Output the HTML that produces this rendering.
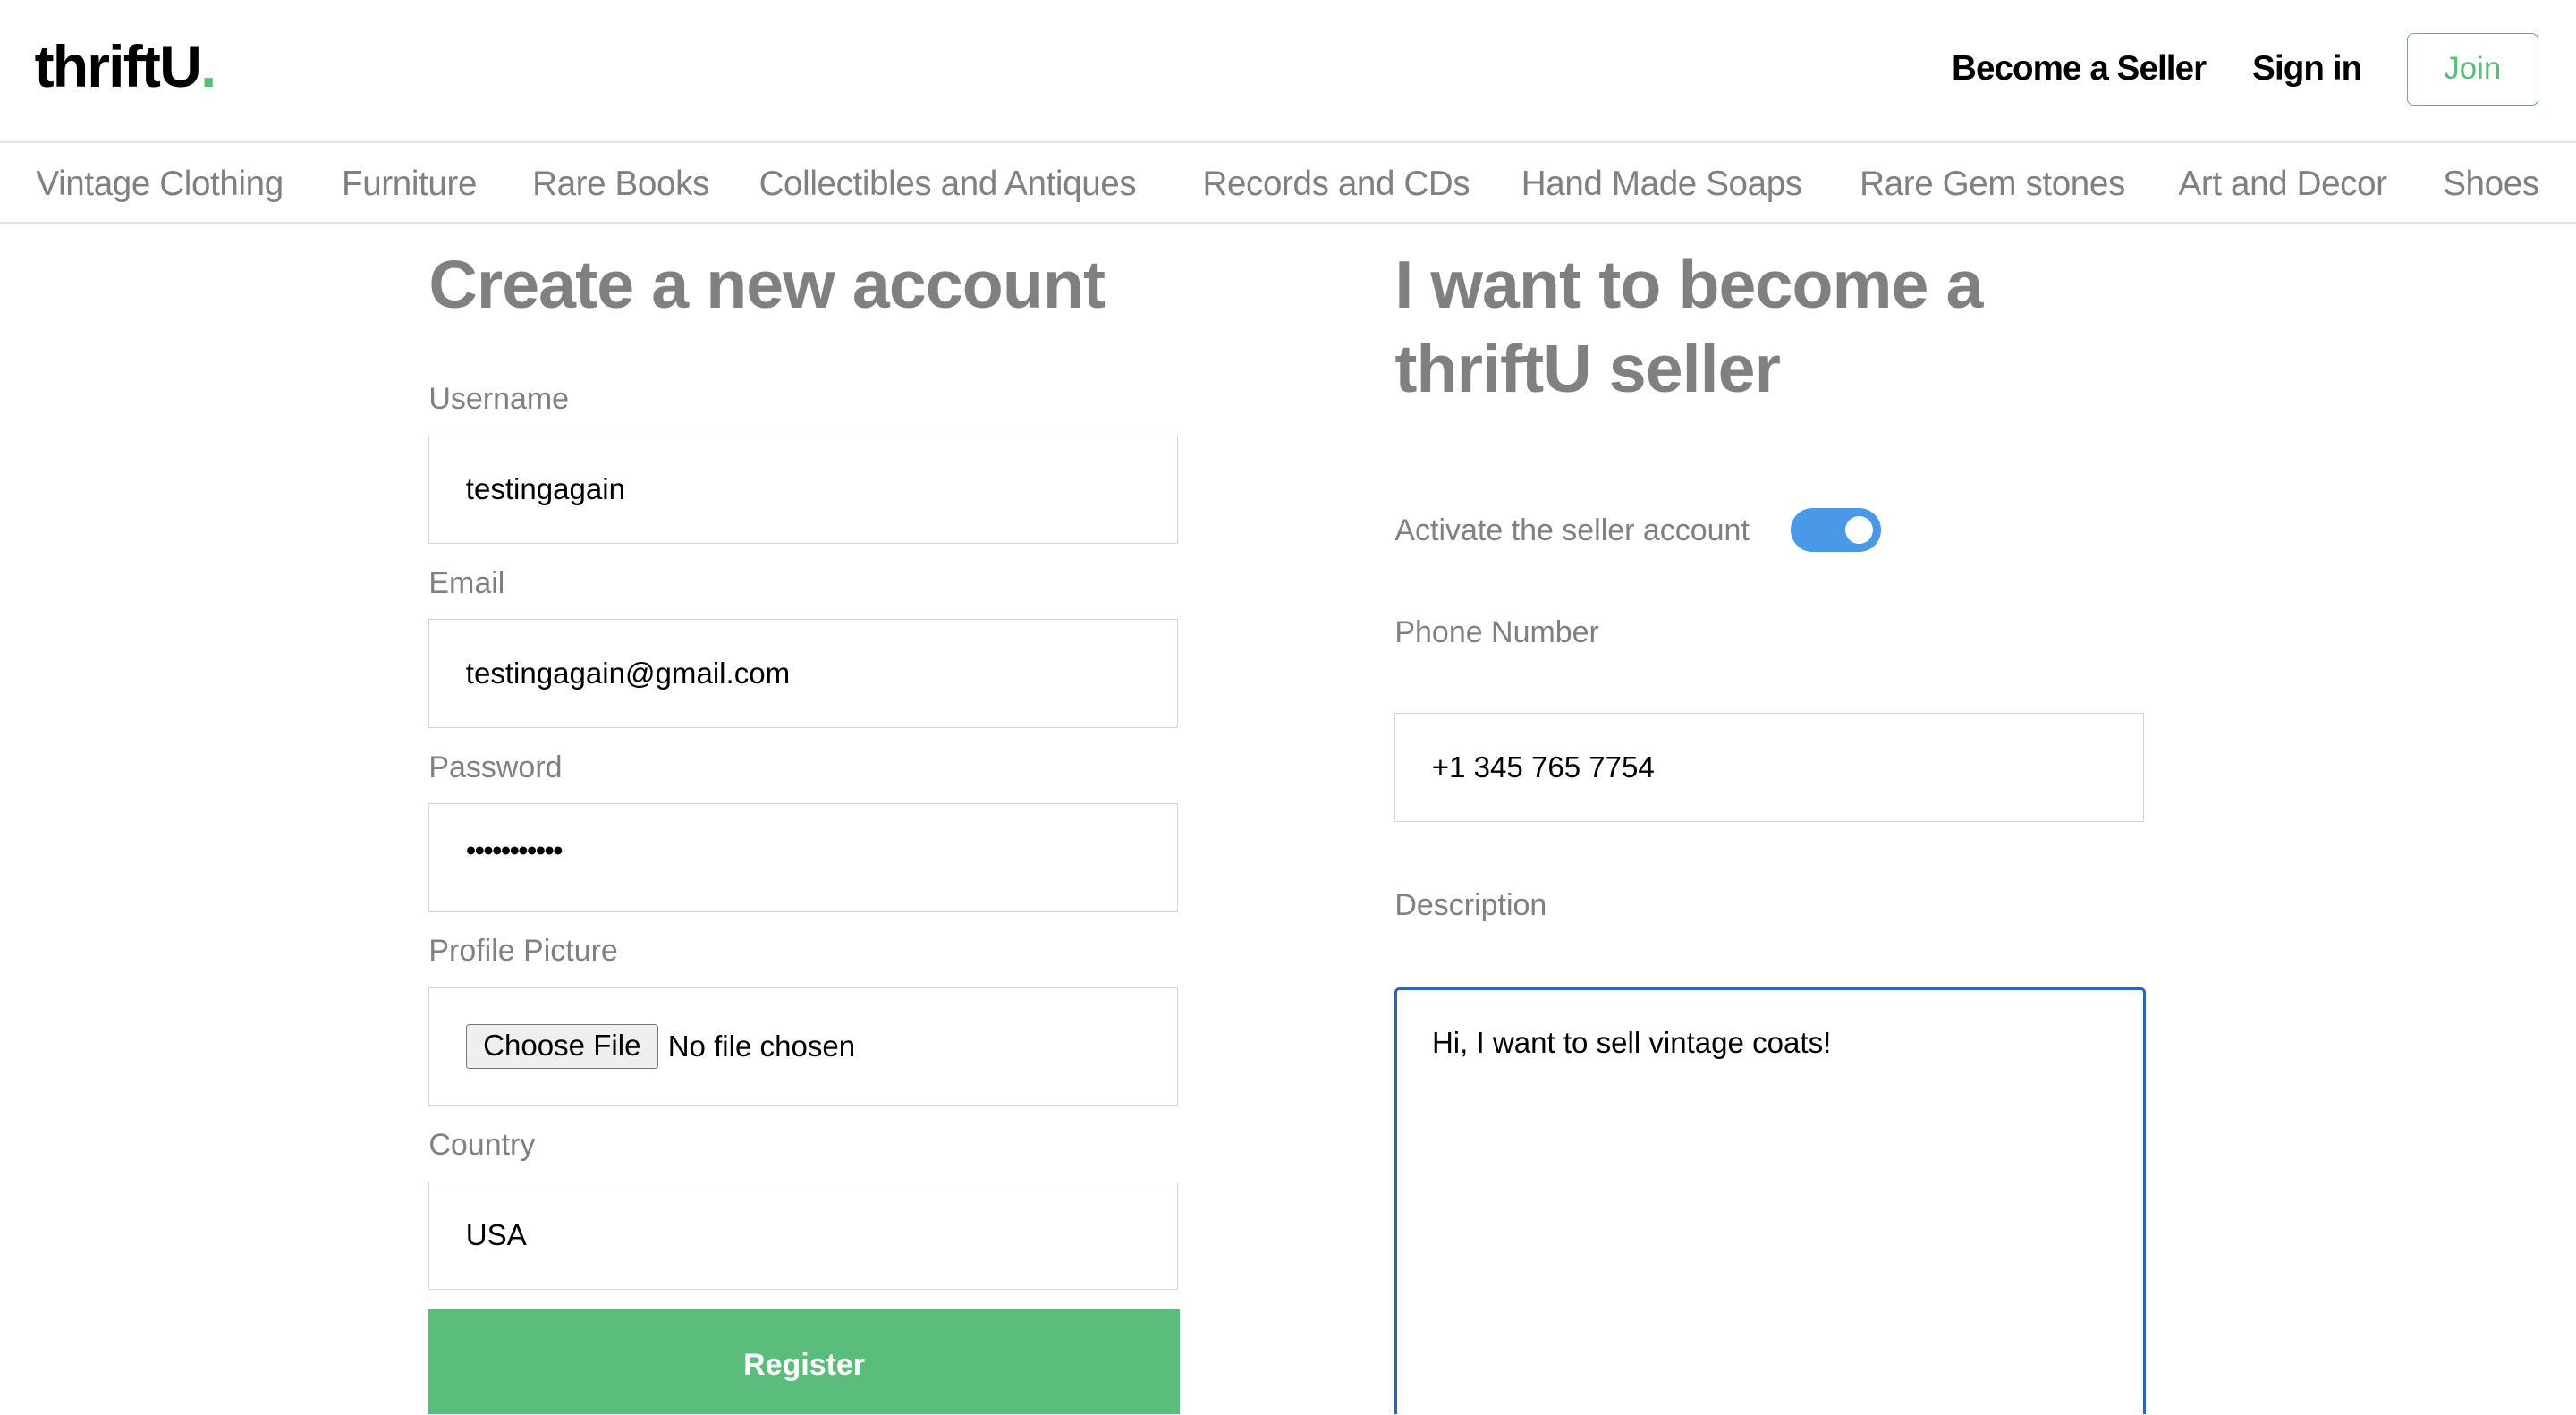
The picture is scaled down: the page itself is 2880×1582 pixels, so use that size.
<!DOCTYPE html>
<html><head><meta charset="utf-8"><style>
html,body{margin:0;padding:0;background:#fff;overflow:hidden}
body{width:2880px;height:1582px}
#w{zoom:1.83673;width:1568px;height:861px;position:relative;font-family:"Liberation Sans",Arial,sans-serif;overflow:hidden}
.a{position:absolute;white-space:nowrap}
.nav{top:99px;font-size:21px;color:#808080;line-height:26px;letter-spacing:-0.2px}
.h{color:#808080;font-weight:bold;font-size:41px;line-height:51px;letter-spacing:-0.5px}
.lbl{color:#808080;font-size:18.5px;line-height:22px}
.in{position:absolute;left:261px;width:455px;border:1px solid #d4d4d4;background:#fff}
.in span{position:absolute;left:22px;font-size:18px;color:#000;line-height:22px}
</style></head><body><div id="w">
<div class="a" style="left:21px;top:20px;font-size:36px;font-weight:bold;letter-spacing:-1px;line-height:42px">thriftU<span style="color:#5bbd7b">.</span></div>
<div class="a" style="left:1188px;top:30px;font-size:21px;font-weight:bold;letter-spacing:-0.5px">Become a Seller</div>
<div class="a" style="left:1371px;top:30px;font-size:21px;font-weight:bold;letter-spacing:-0.5px">Sign in</div>
<div class="a" style="left:1465px;top:20px;width:79px;height:43px;border:1px solid #5bbd7b;border-radius:4px;color:#5bbd7b;font-size:19px;text-align:center;line-height:43px">Join</div>
<div class="a" style="left:0;top:86px;width:1568px;height:1px;background:#e2e2e2"></div>
<div class="a" style="left:0;top:135px;width:1568px;height:1px;background:#e2e2e2"></div>
<div class="a nav" style="left:22px">Vintage Clothing</div>
<div class="a nav" style="left:208px">Furniture</div>
<div class="a nav" style="left:324px">Rare Books</div>
<div class="a nav" style="left:462px">Collectibles and Antiques</div>
<div class="a nav" style="left:732px">Records and CDs</div>
<div class="a nav" style="left:926px">Hand Made Soaps</div>
<div class="a nav" style="left:1132px">Rare Gem stones</div>
<div class="a nav" style="left:1326px">Art and Decor</div>
<div class="a nav" style="left:1487px">Shoes</div>

<div class="a h" style="left:261px;top:148px">Create a new account</div>
<div class="a lbl" style="left:261px;top:232px">Username</div>
<div class="in" style="top:265px;height:65px"><span style="top:22px">testingagain</span></div>
<div class="a lbl" style="left:261px;top:344px">Email</div>
<div class="in" style="top:377px;height:65px"><span style="top:22px">testingagain@gmail.com</span></div>
<div class="a lbl" style="left:261px;top:456px">Password</div>
<div class="in" style="top:489px;height:65px"><span style="top:18px;letter-spacing:-1px">•••••••••••</span></div>
<div class="a lbl" style="left:261px;top:568px">Profile Picture</div>
<div class="in" style="top:601px;height:71px">
 <div style="position:absolute;left:22px;top:22px;width:116px;height:26px;border:1px solid #777;border-radius:2px;background:#efefef;font-size:18px;text-align:center;line-height:26px">Choose File</div>
 <span style="left:145px;top:25px">No file chosen</span></div>
<div class="a lbl" style="left:261px;top:686px">Country</div>
<div class="in" style="top:719px;height:65px"><span style="top:22px">USA</span></div>
<div class="a" style="left:261px;top:797px;width:457px;height:70px;background:#5bbd7b;color:#fff;font-weight:bold;font-size:18.5px;text-align:center;line-height:68px">Register</div>

<div class="a h" style="left:849px;top:148px">I want to become a<br>thriftU seller</div>
<div class="a lbl" style="left:849px;top:312px">Activate the seller account</div>
<div class="a" style="left:1090px;top:309px;width:55px;height:27px;border-radius:14px;background:#4a98e8"><div style="position:absolute;right:5px;top:5px;width:17px;height:17px;border-radius:50%;background:#fff"></div></div>
<div class="a lbl" style="left:849px;top:374px">Phone Number</div>
<div class="in" style="left:849px;top:434px;height:65px"><span style="top:22px">+1 345 765 7754</span></div>
<div class="a lbl" style="left:849px;top:540px">Description</div>
<div class="a" style="left:849px;top:601px;width:454px;height:280px;border:2px solid #2a63c4;border-radius:3px"><span style="position:absolute;left:21px;top:22px;font-size:18px;line-height:22px">Hi, I want to sell vintage coats!</span></div>
</div></body></html>
